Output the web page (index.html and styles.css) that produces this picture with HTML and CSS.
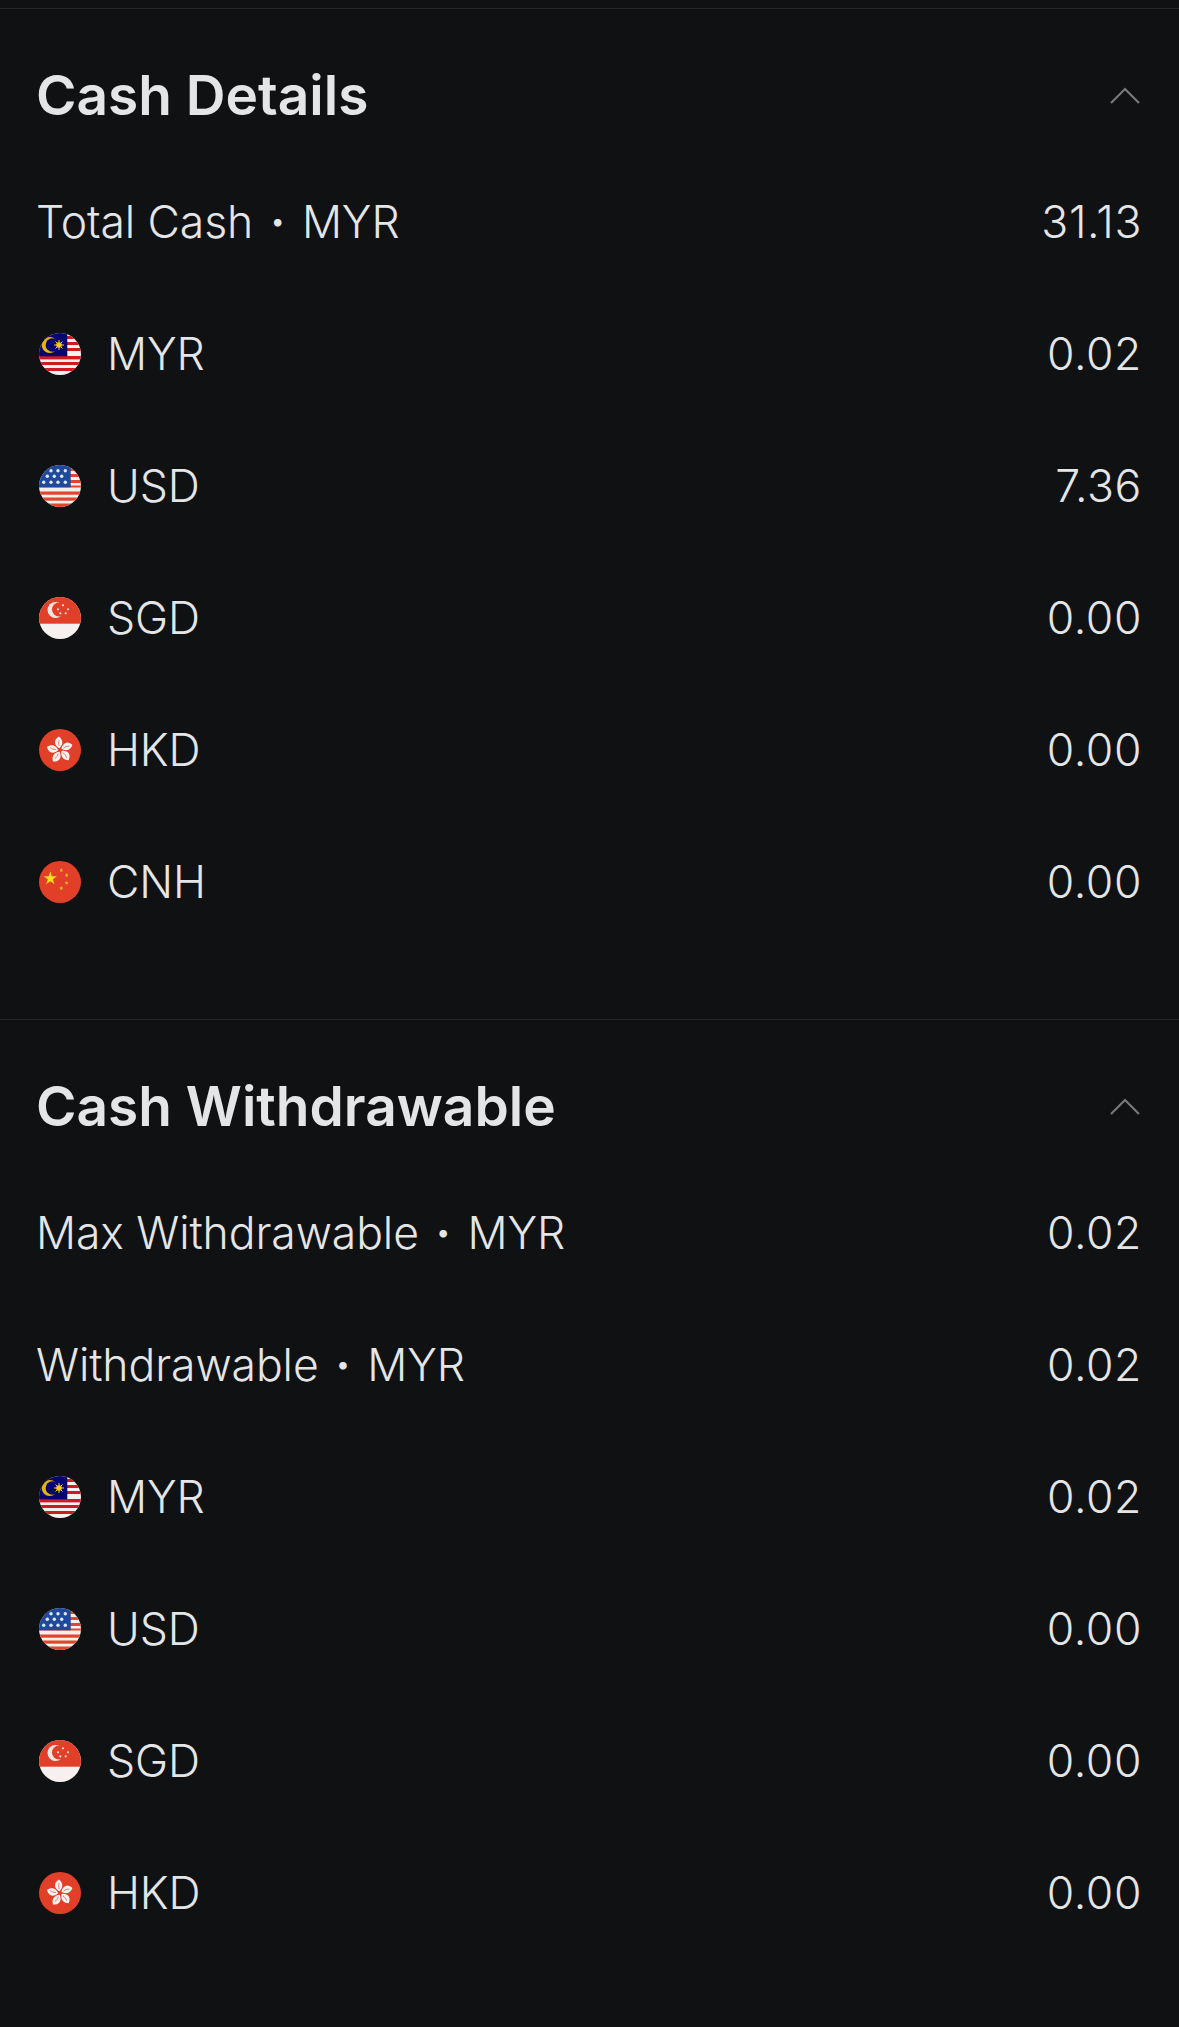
FILE: index.html
```html
<!DOCTYPE html>
<html lang="en">
<head>
<meta charset="utf-8">
<title>Cash</title>
<link rel="stylesheet" href="styles.css">
</head>
<body>
<svg class="defs" width="0" height="0" aria-hidden="true">
  <defs>
    <clipPath id="c"><circle cx="21" cy="21" r="21"/></clipPath>
    <symbol id="my" viewBox="0 0 42 42">
      <g clip-path="url(#c)">
        <rect width="42" height="42" fill="#f4f1f0"/>
        <g fill="#cf1a1f"><rect y="3" width="42" height="3"/><rect y="9" width="42" height="3"/><rect y="15" width="42" height="3"/><rect y="23" width="42" height="3.400"/><rect y="29" width="42" height="3"/><rect y="35" width="42" height="3"/></g>
        <rect width="28.300" height="23.300" fill="#06066e"/>
        <circle cx="10.700" cy="12" r="8" fill="#e9b311"/>
        <circle cx="13.400" cy="12" r="6.800" fill="#06066e"/>
        <circle cx="20" cy="12" r="2.800" fill="#f7c81e"/>
        <path d="M20 7v10M15 12h10M16.500 8.500l7 7M23.500 8.500l-7 7" stroke="#f7c81e" stroke-width="1"/>
      </g>
    </symbol>
    <symbol id="us" viewBox="0 0 42 42">
      <g clip-path="url(#c)">
        <rect width="42" height="42" fill="#f6efec"/>
        <g fill="#e2452e"><rect y="3" width="42" height="3"/><rect y="9" width="42" height="3"/><rect y="15" width="42" height="3"/><rect y="20.500" width="42" height="2"/><rect y="26.500" width="42" height="3.200"/><rect y="32.500" width="42" height="3.200"/><rect y="38.500" width="42" height="3.500"/></g>
        <rect width="31.700" height="22.300" fill="#1f4a9c"/>
        <g fill="#dfe6f4"><circle cx="12" cy="5.700" r="1.700"/><circle cx="19" cy="5.700" r="1.700"/><circle cx="26.300" cy="5.700" r="1.700"/><circle cx="8.300" cy="11.300" r="1.700"/><circle cx="15.300" cy="11.300" r="1.700"/><circle cx="22.700" cy="11.300" r="1.700"/><circle cx="4.700" cy="17.300" r="1.700"/><circle cx="12" cy="17.300" r="1.700"/><circle cx="19" cy="17.300" r="1.700"/><circle cx="26.300" cy="17.300" r="1.700"/></g>
      </g>
    </symbol>
    <symbol id="sg" viewBox="0 0 42 42">
      <g clip-path="url(#c)">
        <rect width="42" height="42" fill="#f6f1f0"/>
        <rect width="42" height="26.700" fill="#e23f28"/>
        <circle cx="16.500" cy="13" r="8" fill="#f6e6e2"/>
        <circle cx="20" cy="12.500" r="7" fill="#e23f28"/>
        <g fill="#f6e6e2"><circle cx="24" cy="8.300" r="1.100"/><circle cx="19" cy="12.300" r="1.100"/><circle cx="29" cy="12.300" r="1.100"/><circle cx="21.300" cy="16.300" r="1.100"/><circle cx="26.700" cy="16.300" r="1.100"/></g>
      </g>
    </symbol>
    <symbol id="hk" viewBox="0 0 42 42">
      <circle cx="21" cy="21" r="21" fill="#e23f28"/>
      <g id="petal">
        <path d="M20.300 19.300c-2.700-1.400-4.600-3.800-4.300-6.600.2-2.100 2-3.900 4-5.100 2 1.600 3.600 4 3.300 6.500-.2 2-1.400 3.900-3 5.200z" fill="#f8f0ee"/>
        <path d="M20.300 17c-.8-2-.9-4-.1-6" fill="none" stroke="#e23f28" stroke-width=".6"/>
      </g>
      <use href="#petal" transform="rotate(72 21 21)"/>
      <use href="#petal" transform="rotate(144 21 21)"/>
      <use href="#petal" transform="rotate(216 21 21)"/>
      <use href="#petal" transform="rotate(288 21 21)"/>
    </symbol>
    <symbol id="cn" viewBox="0 0 42 42">
      <circle cx="21" cy="21" r="21" fill="#e23f28"/>
      <path d="M0-1 .225-.31H.95L.363.12.588.81 0 .38-.588.81-.363.12-.95-.31H-.225z" fill="#fbdc1e" transform="translate(11.300 17.500) scale(7)"/>
      <g fill="#f8c51d">
        <path d="M0-1 .225-.31H.95L.363.12.588.81 0 .38-.588.81-.363.12-.95-.31H-.225z" transform="translate(22.300 9.300) scale(2.200)"/>
        <path d="M0-1 .225-.31H.95L.363.12.588.81 0 .38-.588.81-.363.12-.95-.31H-.225z" transform="translate(27.700 14.300) scale(2.200)"/>
        <path d="M0-1 .225-.31H.95L.363.12.588.81 0 .38-.588.81-.363.12-.95-.31H-.225z" transform="translate(27.700 22) scale(2.200)"/>
        <path d="M0-1 .225-.31H.95L.363.12.588.81 0 .38-.588.81-.363.12-.95-.31H-.225z" transform="translate(22.300 27.300) scale(2.200)"/>
      </g>
    </symbol>
  </defs>
</svg>

<main class="page">
  <section class="section">
    <header class="section-head">
      <h2 class="section-title">Cash Details</h2>
      <svg class="chevron" viewBox="0 0 30 18"><path d="M1 16 15 2l14 14"/></svg>
    </header>
    <div class="row"><span class="label">Total Cash<i class="dot">·</i>MYR</span><span class="value">31.13</span></div>
    <div class="row"><span class="label"><svg class="flag"><use href="#my"/></svg>MYR</span><span class="value">0.02</span></div>
    <div class="row"><span class="label"><svg class="flag"><use href="#us"/></svg>USD</span><span class="value">7.36</span></div>
    <div class="row"><span class="label"><svg class="flag"><use href="#sg"/></svg>SGD</span><span class="value">0.00</span></div>
    <div class="row"><span class="label"><svg class="flag"><use href="#hk"/></svg>HKD</span><span class="value">0.00</span></div>
    <div class="row"><span class="label"><svg class="flag"><use href="#cn"/></svg>CNH</span><span class="value">0.00</span></div>
  </section>
  <section class="section">
    <header class="section-head">
      <h2 class="section-title">Cash Withdrawable</h2>
      <svg class="chevron" viewBox="0 0 30 18"><path d="M1 16 15 2l14 14"/></svg>
    </header>
    <div class="row"><span class="label">Max Withdrawable<i class="dot">·</i>MYR</span><span class="value">0.02</span></div>
    <div class="row"><span class="label">Withdrawable<i class="dot">·</i>MYR</span><span class="value">0.02</span></div>
    <div class="row"><span class="label"><svg class="flag"><use href="#my"/></svg>MYR</span><span class="value">0.02</span></div>
    <div class="row"><span class="label"><svg class="flag"><use href="#us"/></svg>USD</span><span class="value">0.00</span></div>
    <div class="row"><span class="label"><svg class="flag"><use href="#sg"/></svg>SGD</span><span class="value">0.00</span></div>
    <div class="row"><span class="label"><svg class="flag"><use href="#hk"/></svg>HKD</span><span class="value">0.00</span></div>
  </section>
</main>
</body>
</html>
```

FILE: styles.css
```css
* { box-sizing: border-box; }
html, body { margin: 0; background: #101113; }
body { height: 2027px; overflow: hidden; font-family: Inter, "Noto Sans", sans-serif; color: #e4e5e7; }
.defs { position: absolute; }
.page { padding-top: 8px; }
.section { border-top: 1px solid #26272a; height: 1011px; padding: 0 36px; }
.section-head { display: flex; align-items: center; justify-content: space-between; height: 147px; padding-right: 3px; padding-top: 24px; }
.section-title { margin: 0; font-size: 55px; font-weight: 600; color: #e4e5e7; }
.chevron { width: 30px; height: 18px; margin-top: 2px; fill: none; stroke: #77787b; stroke-width: 2.2; }
.row { display: flex; align-items: center; justify-content: space-between; height: 132px; font-size: 44.500px; font-weight: 300; letter-spacing: -0.1px; }
.label { display: flex; align-items: center; }
.dot { font-style: normal; font-weight: 700; margin: 0 17px; }
.flag { width: 42px; height: 42px; margin: 0 26px 0 3px; flex: none; }
.value { margin-right: 1px; letter-spacing: 0.6px; }
```
